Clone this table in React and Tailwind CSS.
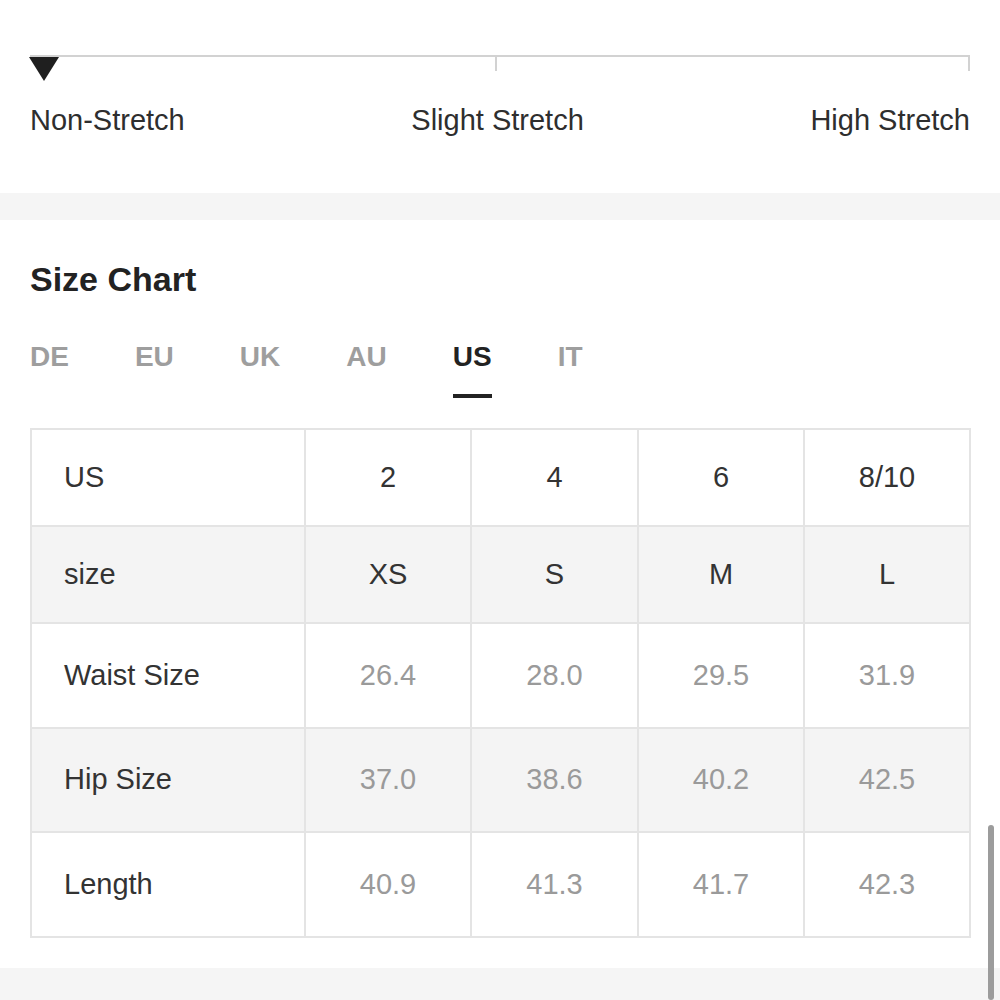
const tabs = ['DE', 'EU', 'UK', 'AU', 'US', 'IT'];

const rows = [
  { label: 'US', values: ['2', '4', '6', '8/10'], head: true, shade: false, h: 'h-[97px]' },
  { label: 'size', values: ['XS', 'S', 'M', 'L'], head: true, shade: true, h: 'h-[97px]' },
  { label: 'Waist Size', values: ['26.4', '28.0', '29.5', '31.9'], head: false, shade: false, h: 'h-[105px]' },
  { label: 'Hip Size', values: ['37.0', '38.6', '40.2', '42.5'], head: false, shade: true, h: 'h-[104px]' },
  { label: 'Length', values: ['40.9', '41.3', '41.7', '42.3'], head: false, shade: false, h: 'h-[105px]' },
];

export default function App() {
  return (
    <div className="relative w-[1000px] h-[1000px] overflow-hidden bg-white text-[#333] font-['Liberation_Sans',Arial,sans-serif]">

      {/* Stretch scale */}
      <section className="h-[193px] px-[30px] pt-[55px]">
        <div className="relative flex h-[16px] border-t-2 border-r-2 border-[#d2d2d2]">
          <div className="w-[467px] h-full border-r-2 border-[#d2d2d2]" />
          <svg className="absolute left-[-1px] top-0" width="30" height="24" viewBox="0 0 30 24">
            <polygon points="0,0 30,0 15,24" fill="#1f1f1f" />
          </svg>
        </div>
        <div className="mt-[32px] flex justify-between text-[29px] leading-[34px] text-[#2e2e2e]">
          <span>Non-Stretch</span>
          <span>Slight Stretch</span>
          <span>High Stretch</span>
        </div>
      </section>

      <div className="h-[27px] bg-[#f5f5f5]" />

      {/* Size chart */}
      <section className="h-[748px] px-[30px] pt-[40px]">
        <h2 className="text-[34px] leading-[38px] font-bold text-[#222]">Size Chart</h2>

        <div className="mt-[42px] flex gap-[66px]">
          {tabs.map((t) => (
            <div key={t} className="flex flex-col">
              <span className={`text-[28px] leading-[34px] font-bold ${t === 'US' ? 'text-[#222]' : 'text-[#9e9e9e]'}`}>{t}</span>
              <span className={`mt-[20px] h-[4px] ${t === 'US' ? 'bg-[#222]' : 'bg-transparent'}`} />
            </div>
          ))}
        </div>

        <table className="mt-[30px] w-[939px] table-fixed border-collapse border-2 border-[#e4e4e4] text-[29px]">
          <colgroup>
            <col className="w-[274px]" />
            <col className="w-[166px]" />
            <col className="w-[167px]" />
            <col className="w-[166px]" />
            <col className="w-[166px]" />
          </colgroup>
          <tbody>
            {rows.map((r) => (
              <tr key={r.label} className={`${r.h} ${r.shade ? 'bg-[#f4f4f4]' : 'bg-white'}`}>
                <td className="border-2 border-[#e4e4e4] pl-[32px] text-[#333]">{r.label}</td>
                {r.values.map((v, i) => (
                  <td key={i} className={`border-2 border-[#e4e4e4] text-center ${r.head ? 'text-[#333]' : 'text-[#9a9a9a]'}`}>{v}</td>
                ))}
              </tr>
            ))}
          </tbody>
        </table>
      </section>

      <div className="h-[32px] bg-[#f5f5f5]" />

      {/* overlay scrollbar */}
      <div className="absolute left-[988px] top-[825px] w-[6px] h-[175px] rounded-full bg-[#9c9c9c]" />
    </div>
  );
}
